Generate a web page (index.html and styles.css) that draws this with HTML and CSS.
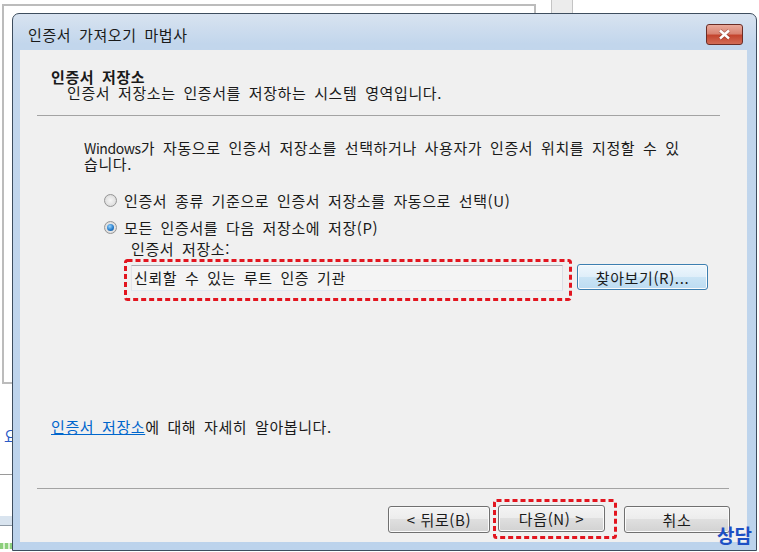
FILE: index.html
```html
<!DOCTYPE html>
<html lang="ko">
<head>
    <meta charset="UTF-8">
    <meta name="viewport" content="width=device-width, initial-scale=1.0">
    <title>인증서 가져오기 마법사</title>
    <link rel="stylesheet" href="styles.css">
</head>
<body>
    <div class="desk">
        <!-- page behind the dialog -->
        <div class="bg-window"></div>
        <div class="bg-scroll"></div>
        <span class="bg-link">요</span>
        <div class="bg-line"></div>
        <div class="bg-band"></div>
        <div class="bg-green"></div>

        <div class="dialog">
            <div class="titlebar">
                <span class="title">인증서 가져오기 마법사</span>
                <div class="close-btn">
                    <svg width="13" height="11" viewBox="0 0 13 11">
                        <path d="M2 1.5 L11 9.5 M11 1.5 L2 9.5" stroke="#5a1a14" stroke-width="4" opacity="0.35" fill="none"></path>
                        <path d="M2 1.5 L11 9.5 M11 1.5 L2 9.5" stroke="#ffffff" stroke-width="2.4" fill="none"></path>
                    </svg>
                </div>
            </div>

            <div class="client">
                <div class="header">
                    <h1>인증서 저장소</h1>
                    <p class="subtitle">인증서 저장소는 인증서를 저장하는 시스템 영역입니다.</p>
                </div>
                <div class="sep sep-top"></div>

                <div class="content">
                    <p class="intro"><span class="latin">Windows</span>가 자동으로 인증서 저장소를 선택하거나 사용자가 인증서 위치를 지정할 수 있<br>습니다.</p>
                    <div class="radio-row"><span class="radio"></span>인증서 종류 기준으로 인증서 저장소를 자동으로 선택(U)</div>
                    <div class="radio-row"><span class="radio checked"></span>모든 인증서를 다음 저장소에 저장(P)</div>
                    <div class="store-label">인증서 저장소:</div>
                    <div class="store-row">
                        <div class="mark mark-field">
                            <div class="field">신뢰할 수 있는 루트 인증 기관</div>
                            <svg class="mark-line"><rect class="mark-rect" x="1.5" y="1.5" rx="2"></rect></svg>
                        </div>
                        <button class="btn btn-default btn-browse">찾아보기(R)...</button>
                    </div>
                </div>

                <p class="more"><a href="#">인증서 저장소</a>에 대해 자세히 알아봅니다.</p>
                <div class="sep sep-bottom"></div>

                <div class="footer">
                    <button class="btn btn-back">&lt; 뒤로(B)</button>
                    <div class="mark mark-next">
                        <button class="btn btn-next">다음(N) &gt;</button>
                        <svg class="mark-line"><rect class="mark-rect" x="1.5" y="1.5" rx="2"></rect></svg>
                    </div>
                    <button class="btn btn-cancel">취소</button>
                </div>
            </div>
        </div>

        <span class="chat">상담</span>
    </div>
</body>
</html>
```

FILE: styles.css
```css
* {
    margin: 0;
    padding: 0;
    box-sizing: border-box;
}

body {
    font-family: "Noto Sans CJK KR", "Noto Sans", sans-serif;
    font-size: 15px;
    letter-spacing: 0.6px;
    word-spacing: 3px;
    color: #1a1a1a;
    background: #ffffff;
    width: 759px;
    height: 552px;
    overflow: hidden;
}

.desk {
    position: relative;
    width: 759px;
    height: 552px;
    overflow: hidden;
}

/* background page */
.bg-window {
    position: absolute;
    left: 2px;
    top: 4px;
    width: 534px;
    height: 380px;
    border: 2px solid #bcbcbc;
}

.bg-scroll {
    position: absolute;
    left: 551px;
    top: 0;
    width: 22px;
    height: 13px;
    background: #ececec;
    border-left: 1px solid #c4c4c4;
    border-right: 1px solid #c4c4c4;
}

.bg-link {
    position: absolute;
    left: 4px;
    top: 427px;
    color: #2a5bc7;
    font-size: 15px;
    line-height: 18px;
}

.bg-line {
    position: absolute;
    left: 0;
    top: 474px;
    width: 12px;
    height: 1px;
    background: #9a9a9a;
}

.bg-band {
    position: absolute;
    left: 0;
    top: 516px;
    width: 12px;
    height: 10px;
    background: #d9e4ef;
    border-bottom: 1px solid #8e9aa6;
}

.bg-green {
    position: absolute;
    left: 0;
    top: 543px;
    width: 12px;
    height: 6px;
    background: repeating-linear-gradient(90deg, #8ccf7c 0, #8ccf7c 3px, #d8f0d0 3px, #d8f0d0 5px);
}

/* dialog window */
.dialog {
    position: absolute;
    left: 12px;
    top: 13px;
    width: 745px;
    height: 538px;
    border: 1px solid #3d4d5e;
    border-radius: 7px 7px 0 0;
    background: linear-gradient(#d8e3f0, #c2d6ec 30px, #bcd3ec);
    padding: 0 9px 8px 7px;
    display: flex;
    flex-direction: column;
}

.titlebar {
    height: 36px;
    padding: 5px 4px 0 8px;
    display: flex;
    align-items: center;
    justify-content: space-between;
}

.title {
    color: #1a1a1a;
}

.close-btn {
    width: 37px;
    height: 21px;
    border: 1px solid #6b2d26;
    border-radius: 3px;
    background: linear-gradient(#eaaa9c 0%, #d98473 45%, #c4452f 55%, #d26b55 100%);
    display: flex;
    align-items: center;
    justify-content: center;
}

.client {
    flex: 1;
    background: #f0f0f0;
    display: flex;
    flex-direction: column;
}

.header {
    padding: 19px 0 0 31px;
}

h1 {
    font-size: 15px;
    font-weight: bold;
    line-height: 16px;
}

.subtitle {
    margin-left: 16px;
    line-height: 16px;
}

.sep {
    height: 1px;
    background: #a3a3a3;
}

.sep-top {
    margin: 14px 27px 0 17px;
}

.sep-bottom {
    margin: 0 18px 0 17px;
}

.content {
    flex: 1;
    padding-left: 64px;
}

.intro {
    margin-top: 24px;
    line-height: 15px;
}

.latin {
    font-size: 14px;
    letter-spacing: -0.4px;
}

.radio-row {
    height: 27px;
    margin-left: 20px;
    display: flex;
    align-items: center;
}

.radio-row:first-of-type {
    margin-top: 16px;
}

.radio {
    position: relative;
    width: 13px;
    height: 13px;
    border-radius: 50%;
    border: 1px solid #959595;
    background: radial-gradient(circle at 50% 50%, #f6f6f6 0, #e2e2e2 60%, #cfcfcf 100%);
    margin-right: 7px;
    flex-shrink: 0;
}

.radio.checked::after {
    content: "";
    position: absolute;
    left: 2px;
    top: 2px;
    width: 7px;
    height: 7px;
    border-radius: 50%;
    background: radial-gradient(circle at 40% 35%, #9ad6ff 0, #2a7fcc 55%, #0d4a8a 100%);
}

.store-label {
    margin-left: 47px;
    line-height: 16px;
}

.store-row {
    margin-left: 40px;
    margin-top: 2px;
    display: flex;
    align-items: flex-start;
}

.mark {
    position: relative;
}

.mark-line {
    position: absolute;
    left: 0;
    top: 0;
    width: 100%;
    height: 100%;
    overflow: visible;
    pointer-events: none;
}

.mark-rect {
    width: calc(100% - 3px);
    height: calc(100% - 3px);
    fill: none;
    stroke: #e2151f;
    stroke-width: 3;
    stroke-dasharray: 5 3;
}

.mark-field {
    padding: 6px 9px 10px 7px;
}

.field {
    width: 432px;
    height: 26px;
    border: 1px solid #abadb3;
    border-color: #abadb3 #dbdfe6 #e3e9ef #e2e3ea;
    background: #f4f4f4;
    padding-left: 2px;
    line-height: 24px;
}

.btn {
    font: inherit;
    letter-spacing: inherit;
    word-spacing: 0;
    color: #1a1a1a;
    height: 27px;
    border: 1px solid #707070;
    border-radius: 3px;
    background: linear-gradient(#f4f4f4 0%, #ececec 50%, #dfdfdf 50%, #d2d2d2 100%);
    box-shadow: inset 0 0 0 1px #fbfbfb;
    cursor: pointer;
}

.btn-default {
    border-color: #3c7fb1;
    background: linear-gradient(#eef7fd 0%, #dfeef9 50%, #cae4f5 50%, #bcdcf2 100%);
}

.btn-browse {
    width: 131px;
    height: 26px;
    margin: 5px 0 0 5px;
}

.more {
    padding-left: 31px;
    line-height: 16px;
    margin-bottom: 53px;
}

.more a {
    color: #0066cc;
    text-decoration: underline;
}

.footer {
    padding: 10px 17px 3px 0;
    display: flex;
    justify-content: flex-end;
    align-items: center;
}

.btn-back {
    width: 102px;
    margin-right: 3px;
}

.mark-next {
    padding: 6px 12px 7px 5px;
}

.btn-next {
    width: 107px;
    display: block;
}

.btn-cancel {
    width: 106px;
    margin-left: 7px;
}

.chat {
    position: absolute;
    left: 717px;
    top: 524px;
    font-size: 19px;
    font-weight: bold;
    line-height: 22px;
    letter-spacing: 0;
    color: #1d4fc4;
    white-space: nowrap;
}
```
